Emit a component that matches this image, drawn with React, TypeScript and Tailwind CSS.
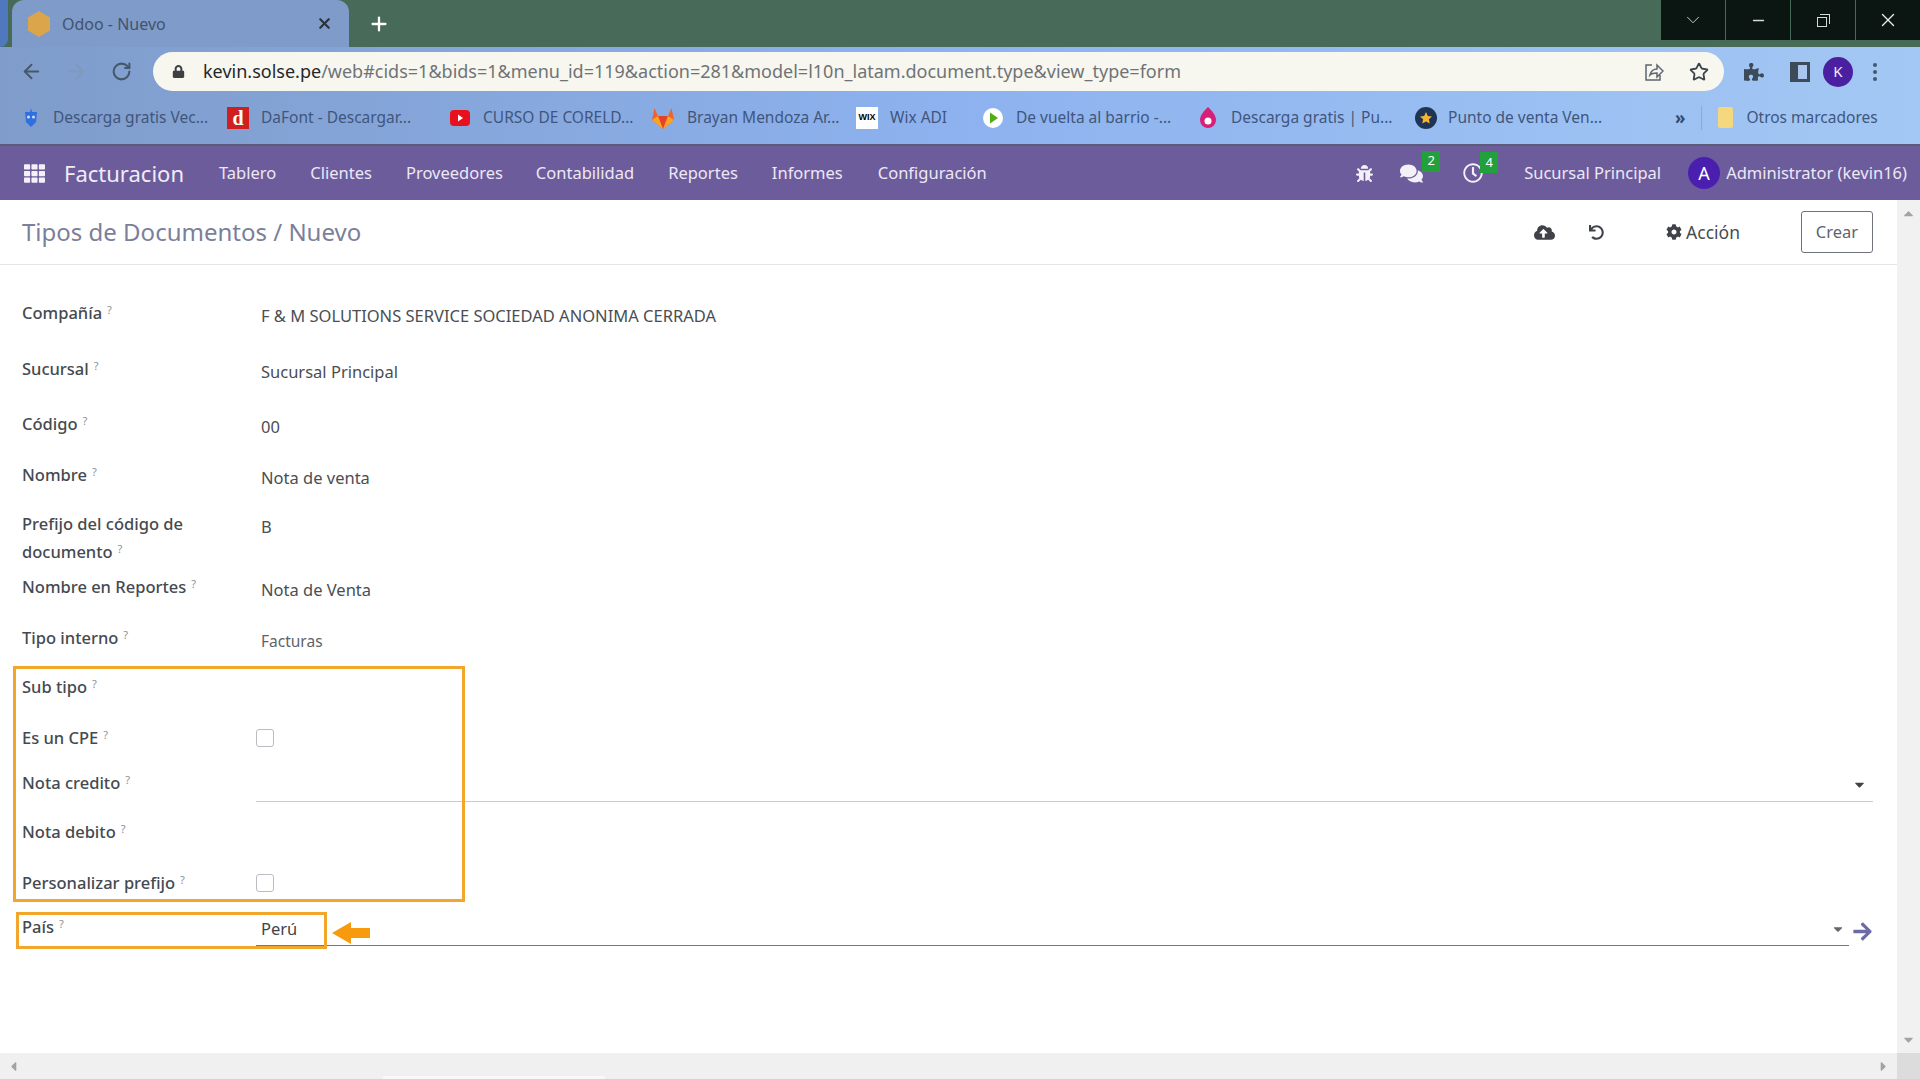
import React from 'react';
import { ArrowLeft, ArrowRight, RotateCw, Star, ChevronDown, Minus, X, Plus } from 'lucide-react';
import {
  FaBug,
  FaCaretDown,
  FaCaretLeft,
  FaCaretRight,
  FaCaretUp,
  FaCloudUploadAlt,
  FaCog,
  FaComments,
  FaLock,
  FaPuzzlePiece,
  FaRegClock,
  FaTh,
  FaUndo,
  FaArrowRight,
} from 'react-icons/fa';

const menuItems = [
  { label: 'Tablero', cls: 'ml-[35px]' },
  { label: 'Clientes', cls: 'ml-[34px]' },
  { label: 'Proveedores', cls: 'ml-[34px]' },
  { label: 'Contabilidad', cls: 'ml-[33px]' },
  { label: 'Reportes', cls: 'ml-[34px]' },
  { label: 'Informes', cls: 'ml-[34px]' },
  { label: 'Configuración', cls: 'ml-[35px]' },
];

function RobotIcon() {
  return (
    <svg width="18" height="20" viewBox="0 0 18 20">
      <path d="M9 0l1 4h5l-1 10-5 5-5-5L3 4h5z" fill="#2f6fe0" />
      <circle cx="6.5" cy="9" r="1.5" fill="#cfe0ff" />
      <circle cx="11.5" cy="9" r="1.5" fill="#cfe0ff" />
    </svg>
  );
}

function DafontIcon() {
  return (
    <div className="flex h-[22px] w-[22px] items-center justify-center bg-[#d01f1f] font-['Liberation_Serif',serif] text-[20px] font-bold leading-none text-white">
      d
    </div>
  );
}

function YoutubeIcon() {
  return (
    <svg width="20" height="18" viewBox="0 0 20 18">
      <rect x="0" y="1" width="20" height="16" rx="4" fill="#e8101c" />
      <path d="M8 5.5l5 3.5-5 3.5z" fill="#fff" />
    </svg>
  );
}

function GitlabIcon() {
  return (
    <svg width="24" height="22" viewBox="0 0 24 22">
      <path d="M12 22L1 13 3.5 1 7 9h10l3.500-8L23 13z" fill="#f0642c" />
      <path d="M12 22L7 9h10z" fill="#e24329" />
      <path d="M12 22L1 13l6-4zM12 22l11-9-6-4z" fill="#fca326" />
    </svg>
  );
}

function WixIcon() {
  return (
    <div className="flex h-[22px] w-[22px] items-center justify-center bg-white font-['Liberation_Sans',sans-serif] text-[9px] font-bold leading-none text-black">
      WIX
    </div>
  );
}

function PlayIcon() {
  return (
    <svg width="20" height="20" viewBox="0 0 20 20">
      <circle cx="10" cy="10" r="10" fill="#fff" />
      <path d="M7 4.500l8 5.500-8 5.500z" fill="#4fae12" />
    </svg>
  );
}

function DropIcon() {
  return (
    <svg width="18" height="22" viewBox="0 0 18 22">
      <path d="M9 0c4 4 8 8 8 13a8 8 0 0 1-16 0C1 8 5 4 9 0z" fill="#d81f78" />
      <circle cx="9" cy="14" r="3.500" fill="#fff" />
    </svg>
  );
}

function StarBadgeIcon() {
  return (
    <svg width="22" height="22" viewBox="0 0 22 22">
      <circle cx="11" cy="11" r="11" fill="#1f3556" />
      <path d="M11 5l1.800 3.900 4.200.5-3.100 2.900.8 4.200-3.700-2.100-3.700 2.100.8-4.200L5 9.400l4.200-.5z" fill="#f2b632" />
    </svg>
  );
}

const bookmarks = [
  { label: 'Descarga gratis Vec...', icon: <RobotIcon />, cls: 'w-[205px]', text: 'ml-[13px]' },
  { label: 'DaFont - Descargar...', icon: <DafontIcon />, cls: 'w-[223px]', text: 'ml-[12px]' },
  { label: 'CURSO DE CORELD...', icon: <YoutubeIcon />, cls: 'w-[201px]', text: 'ml-[13px]' },
  { label: 'Brayan Mendoza Ar...', icon: <GitlabIcon />, cls: 'w-[205px]', text: 'ml-[12px]' },
  { label: 'Wix ADI', icon: <WixIcon />, cls: 'w-[127px]', text: 'ml-[12px]' },
  { label: 'De vuelta al barrio -...', icon: <PlayIcon />, cls: 'w-[216px]', text: 'ml-[13px]' },
  { label: 'Descarga gratis | Pu...', icon: <DropIcon />, cls: 'w-[216px]', text: 'ml-[14px]' },
  { label: 'Punto de venta Ven...', icon: <StarBadgeIcon />, cls: 'w-[260px]', text: 'ml-[11px]' },
];

function Hint() {
  return <sup className="ml-[5px] text-[11px] font-normal text-[#8b9199]">?</sup>;
}

function ChromeBar() {
  return (
    <div className="flex h-[47px] items-start bg-[#486a58]">
      <div className="h-[47px] w-[8px] rounded-br-[8px] bg-[#4f78bf]" />
      <div className="ml-[4px] flex h-[47px] w-[337px] items-center rounded-t-[12px] bg-[#7e9bc9] pl-[15px] pr-[16px]">
        <svg width="24" height="26" viewBox="0 0 24 26">
          <path d="M12 0l11 6.500v13L12 26 1 19.500v-13z" fill="#dba64b" />
        </svg>
        <span className="ml-[11px] flex-1 text-[16px] text-[#43536c]">Odoo - Nuevo</span>
        <X size={17} strokeWidth={3} className="text-[#2a3340]" />
      </div>
      <Plus size={22} strokeWidth={2.500} className="ml-[19px] mt-[13px] text-white" />
      <div className="ml-auto flex h-[40px]">
        <div className="flex w-[64px] items-center justify-center bg-[#0b1512]">
          <ChevronDown size={22} strokeWidth={1} className="text-[#d5d9d7]" />
        </div>
        <div className="ml-px flex w-[64px] items-center justify-center bg-[#0b1512]">
          <Minus size={17} className="text-[#d5d9d7]" />
        </div>
        <div className="ml-px flex w-[64px] items-center justify-center bg-[#0b1512]">
          <div className="relative h-[13px] w-[13px]">
            <div className="absolute bottom-0 left-0 h-[10px] w-[10px] border border-[#d5d9d7] bg-[#0b1512]" />
            <div className="absolute right-0 top-0 h-[10px] w-[10px] border-r border-t border-[#d5d9d7]" />
          </div>
        </div>
        <div className="ml-px flex w-[64px] items-center justify-center bg-[#0b1512]">
          <X size={22} strokeWidth={1.500} className="text-[#e8ebe9]" />
        </div>
      </div>
    </div>
  );
}

function ToolBar() {
  return (
    <div className="flex h-[49px] items-center pl-[20px]">
      <ArrowLeft size={23} strokeWidth={2} className="text-[#45586b]" />
      <ArrowRight size={23} strokeWidth={2} className="ml-[22px] text-[#7f99bd]" />
      <RotateCw size={21} strokeWidth={2.300} className="ml-[23px] text-[#45586b]" />
      <div className="ml-[21px] flex h-[39px] w-[1571px] items-center rounded-full bg-[#f7f7ef] pl-[19px] pr-[15px] text-[18px] text-[#6f7377]">
        <FaLock size={13} className="text-[#3c3f43]" />
        <span className="ml-[18px] flex-1 whitespace-nowrap">
          <span className="text-[#25272a]">kevin.solse.pe</span>
          /web#cids=1&bids=1&menu_id=119&action=281&model=l10n_latam.document.type&view_type=form
        </span>
        <svg width="20" height="20" viewBox="0 0 20 20" fill="none" stroke="#5c6670" strokeWidth="1.500">
          <path d="M8 3H2v15h14v-5" />
          <path d="M6 13c1-4 4-6 7-6V3l6 6-6 6v-4c-3 0-5 0-7 2z" />
        </svg>
        <Star size={20} strokeWidth={2.200} className="ml-[25px] text-[#3d444c]" />
      </div>
      <FaPuzzlePiece size={20} className="ml-[20px] text-[#3d4a57]" />
      <div className="ml-[26px] flex h-[20px] w-[20px] justify-end border-[3px] border-[#3d4a57] bg-[#3d4a57]">
        <div className="h-full w-[9px] bg-[#a9c6ee]" />
      </div>
      <div className="ml-[13px] flex h-[30px] w-[30px] items-center justify-center rounded-full bg-[#4a1fa0] text-[15px] text-[#f0e8ff]">
        K
      </div>
      <div className="ml-[20px] flex flex-col gap-[3px]">
        <div className="h-[4px] w-[4px] rounded-full bg-[#45586b]" />
        <div className="h-[4px] w-[4px] rounded-full bg-[#45586b]" />
        <div className="h-[4px] w-[4px] rounded-full bg-[#45586b]" />
      </div>
    </div>
  );
}

function BookmarksBar() {
  return (
    <div className="flex h-[48px] items-center whitespace-nowrap pb-[5px] pl-[22px] text-[15.500px] text-[#40567c]">
      {bookmarks.map((item) => (
        <div key={item.label} className={`flex items-center ${item.cls}`}>
          {item.icon}
          <span className={item.text}>{item.label}</span>
        </div>
      ))}
      <span className="text-[17px] font-bold text-[#36496b]">»</span>
      <div className="ml-[16px] h-[24px] w-px bg-[#8fa9cf]" />
      <div className="ml-[16px] h-[21px] w-[15px] rounded-[2px] bg-[#f5d77e]" />
      <span className="ml-[13px]">Otros marcadores</span>
    </div>
  );
}

function OdooNav() {
  return (
    <nav className="flex h-[56px] items-center border-t-2 border-[#5c5a78] bg-[#6d5c9c] pl-[24px] text-[16.500px] text-[#ece8f4]">
      <FaTh size={21} className="text-[#f3f0f8]" />
      <span className="ml-[19px] text-[22px] text-[#f0ecf6]">Facturacion</span>
      {menuItems.map((item) => (
        <span key={item.label} className={item.cls}>
          {item.label}
        </span>
      ))}
      <FaBug size={17} className="ml-auto text-[#f3f0f8]" />
      <div className="relative ml-[27px]">
        <FaComments size={23} className="text-[#f3f0f8]" />
        <span className="absolute -top-[11px] left-[22px] flex h-[21px] w-[18px] items-center justify-center bg-[#21a03c] text-[13px] text-white">
          2
        </span>
      </div>
      <div className="relative ml-[40px]">
        <FaRegClock size={20} className="text-[#f3f0f8]" />
        <span className="absolute -top-[11px] left-[17px] flex h-[21px] w-[18px] items-center justify-center bg-[#21a03c] text-[13px] text-white">
          4
        </span>
      </div>
      <span className="ml-[41px]">Sucursal Principal</span>
      <div className="ml-[27px] flex h-[32px] w-[32px] items-center justify-center rounded-full bg-[#4a1fb0] text-[18px] text-white">
        A
      </div>
      <span className="ml-[6px] mr-[13px]">Administrator (kevin16)</span>
    </nav>
  );
}

function ControlPanel() {
  return (
    <div className="flex h-[65px] items-center border-b border-[#e6e6e6] pl-[22px] pr-[24px]">
      <h1 className="text-[24px] text-[#7b7f9a]">Tipos de Documentos / Nuevo</h1>
      <FaCloudUploadAlt size={21} className="ml-auto text-[#3f4349]" />
      <FaUndo size={15} className="ml-[34px] text-[#3f4349]" />
      <FaCog size={16} className="ml-[62px] text-[#3f4349]" />
      <span className="ml-[4px] text-[17.500px] text-[#474b52]">Acción</span>
      <button className="ml-[61px] h-[42px] w-[72px] rounded-[3px] border border-[#6f7380] text-[16.500px] text-[#5f636e]">
        Crear
      </button>
    </div>
  );
}

function Row({ cls, children, label }: { cls: string; label: React.ReactNode; children?: React.ReactNode }) {
  return (
    <div className={`flex items-start ${cls}`}>
      <div className="w-[234px] pr-[20px] text-[16.500px] font-medium leading-[28px] text-[#454a50]">{label}</div>
      <div className="min-w-0 flex-1 pt-[3px] pl-[5px] text-[16.500px] leading-[28px] text-[#4a4e53]">{children}</div>
    </div>
  );
}

function FormView() {
  return (
    <div className="relative flex-1 pl-[22px] pr-[24px] pt-[34px]">
      <Row cls="h-[56px]" label={<>Compañía<Hint /></>}>F & M SOLUTIONS SERVICE SOCIEDAD ANONIMA CERRADA</Row>
      <Row cls="h-[55px]" label={<>Sucursal<Hint /></>}>Sucursal Principal</Row>
      <Row cls="h-[51px]" label={<>Código<Hint /></>}>00</Row>
      <Row cls="h-[49px]" label={<>Nombre<Hint /></>}>Nota de venta</Row>
      <Row cls="h-[63px]" label={<>Prefijo del código de documento<Hint /></>}>B</Row>
      <Row cls="h-[51px]" label={<>Nombre en Reportes<Hint /></>}>Nota de Venta</Row>
      <Row cls="h-[49px]" label={<>Tipo interno<Hint /></>}><span className="text-[15.500px] text-[#5f6368]">Facturas</span></Row>
      <Row cls="h-[51px]" label={<>Sub tipo<Hint /></>} />
      <Row cls="h-[45px]" label={<>Es un CPE<Hint /></>}>
        <div className="-ml-[5px] mt-[2px] h-[18px] w-[18px] rounded-[3px] border border-[#b9bcc2] bg-white" />
      </Row>
      <div className="flex h-[49px] items-start">
        <div className="w-[234px] text-[16.500px] font-medium leading-[28px] text-[#454a50]">Nota credito<Hint /></div>
        <div className="flex h-[33px] flex-1 items-center justify-end border-b border-[#c9cbcf] pr-[6px]">
          <FaCaretDown size={15} className="-mt-[1px] text-[#3f4349]" />
        </div>
      </div>
      <Row cls="h-[51px]" label={<>Nota debito<Hint /></>} />
      <Row cls="h-[44px]" label={<>Personalizar prefijo<Hint /></>}>
        <div className="-ml-[5px] mt-[2px] h-[18px] w-[18px] rounded-[3px] border border-[#b9bcc2] bg-white" />
      </Row>
      <div className="flex items-start">
        <div className="w-[234px] text-[16.500px] font-medium leading-[28px] text-[#454a50]">País<Hint /></div>
        <div className="flex h-[33px] flex-1 items-center justify-between border-b border-[#75777f] pl-[5px] pr-[4px] text-[16.500px] text-[#3f4349]">
          Perú
          <FaCaretDown size={14} className="text-[#66666e]" />
        </div>
        <FaArrowRight size={21} className="ml-[3px] mt-[8px] text-[#6b6ba5]" />
      </div>

      {/* marcas del tutorial, encima del formulario */}
      <div className="absolute left-[13px] top-[401px] h-[236px] w-[452px] border-[3px] border-[#f2a62c]" />
      <div className="absolute left-[16px] top-[647px] h-[37px] w-[311px] border-[3px] border-[#f2a62c]" />
      <svg className="absolute left-[332px] top-[657px]" width="38" height="22" viewBox="0 0 38 22">
        <path d="M0 11L19 0v6h19v10H19v6z" fill="#f79a0e" />
      </svg>
    </div>
  );
}

export default function App() {
  return (
    <div className="flex h-screen w-full flex-col overflow-hidden bg-white font-['Noto_Sans','Open_Sans',sans-serif]">
      <ChromeBar />
      <div className="bg-gradient-to-r from-[#7f9cca] via-[#8db2ef] to-[#a3c8f4]">
        <ToolBar />
        <BookmarksBar />
      </div>
      <OdooNav />
      <div className="flex min-h-0 flex-1">
        <main className="flex w-[1897px] flex-col">
          <ControlPanel />
          <FormView />
        </main>
        <div className="flex w-[23px] flex-col items-center justify-between bg-[#f1f1f1] py-[6px] text-[#a3a3a3]">
          <FaCaretUp size={15} />
          <FaCaretDown size={15} />
        </div>
      </div>
      <div className="relative flex h-[26px] items-center justify-between bg-[#f0f0f0] pl-[6px] text-[#a3a3a3]">
        <FaCaretLeft size={15} />
        <div className="absolute bottom-0 left-[383px] h-[3px] w-[222px] bg-[#f8f8f8]" />
        <div className="flex h-full items-center">
          <FaCaretRight size={15} className="mr-[6px]" />
          <div className="h-full w-[23px] bg-[#dcdcdc]" />
        </div>
      </div>
    </div>
  );
}
